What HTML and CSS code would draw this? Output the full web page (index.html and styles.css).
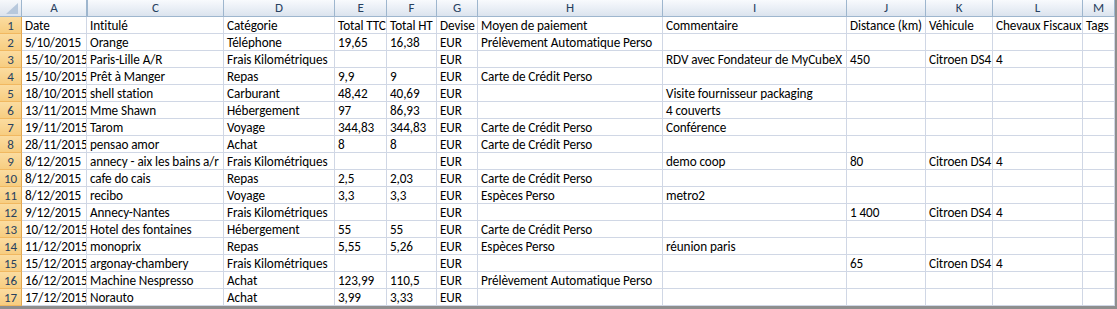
FILE: index.html
```html
<!DOCTYPE html>
<html lang="fr">
<head>
<meta charset="utf-8">
<title>Notes de frais</title>
<link rel="stylesheet" href="styles.css">
</head>
<body>
<div class="sheet">
  <div class="corner"><svg width="22" height="17" viewBox="0 0 22 17"><polygon points="18,3 18,14 6,14" fill="#b7c8dc"/></svg></div>
  <div class="ch sel">A</div><div class="ch hid">C</div><div class="ch">D</div><div class="ch">E</div><div class="ch">F</div><div class="ch">G</div><div class="ch">H</div><div class="ch">I</div><div class="ch">J</div><div class="ch">K</div><div class="ch">L</div><div class="ch">M</div>

  <div class="rh">1</div><div class="c">Date</div><div class="c">Intitulé</div><div class="c">Catégorie</div><div class="c">Total TTC</div><div class="c">Total HT</div><div class="c">Devise</div><div class="c">Moyen de paiement</div><div class="c">Commentaire</div><div class="c">Distance (km)</div><div class="c">Véhicule</div><div class="c">Chevaux Fiscaux</div><div class="c">Tags</div>

  <div class="rh">2</div><div class="c">5/10/2015</div><div class="c">Orange</div><div class="c">Téléphone</div><div class="c">19,65</div><div class="c">16,38</div><div class="c">EUR</div><div class="c">Prélèvement Automatique Perso</div><div class="c"></div><div class="c"></div><div class="c"></div><div class="c"></div><div class="c"></div>

  <div class="rh">3</div><div class="c">15/10/2015</div><div class="c">Paris-Lille A/R</div><div class="c">Frais Kilométriques</div><div class="c"></div><div class="c"></div><div class="c">EUR</div><div class="c"></div><div class="c">RDV avec Fondateur de MyCubeX</div><div class="c">450</div><div class="c">Citroen DS4</div><div class="c">4</div><div class="c"></div>

  <div class="rh">4</div><div class="c">15/10/2015</div><div class="c">Prêt à Manger</div><div class="c">Repas</div><div class="c">9,9</div><div class="c">9</div><div class="c">EUR</div><div class="c">Carte de Crédit Perso</div><div class="c"></div><div class="c"></div><div class="c"></div><div class="c"></div><div class="c"></div>

  <div class="rh">5</div><div class="c">18/10/2015</div><div class="c">shell station</div><div class="c">Carburant</div><div class="c">48,42</div><div class="c">40,69</div><div class="c">EUR</div><div class="c"></div><div class="c">Visite fournisseur packaging</div><div class="c"></div><div class="c"></div><div class="c"></div><div class="c"></div>

  <div class="rh">6</div><div class="c">13/11/2015</div><div class="c">Mme Shawn</div><div class="c">Hébergement</div><div class="c">97</div><div class="c">86,93</div><div class="c">EUR</div><div class="c"></div><div class="c">4 couverts</div><div class="c"></div><div class="c"></div><div class="c"></div><div class="c"></div>

  <div class="rh">7</div><div class="c">19/11/2015</div><div class="c">Tarom</div><div class="c">Voyage</div><div class="c">344,83</div><div class="c">344,83</div><div class="c">EUR</div><div class="c">Carte de Crédit Perso</div><div class="c">Conférence</div><div class="c"></div><div class="c"></div><div class="c"></div><div class="c"></div>

  <div class="rh">8</div><div class="c">28/11/2015</div><div class="c">pensao amor</div><div class="c">Achat</div><div class="c">8</div><div class="c">8</div><div class="c">EUR</div><div class="c">Carte de Crédit Perso</div><div class="c"></div><div class="c"></div><div class="c"></div><div class="c"></div><div class="c"></div>

  <div class="rh">9</div><div class="c">8/12/2015</div><div class="c">annecy - aix les bains a/r</div><div class="c">Frais Kilométriques</div><div class="c"></div><div class="c"></div><div class="c">EUR</div><div class="c"></div><div class="c">demo coop</div><div class="c">80</div><div class="c">Citroen DS4</div><div class="c">4</div><div class="c"></div>

  <div class="rh">10</div><div class="c">8/12/2015</div><div class="c">cafe do cais</div><div class="c">Repas</div><div class="c">2,5</div><div class="c">2,03</div><div class="c">EUR</div><div class="c">Carte de Crédit Perso</div><div class="c"></div><div class="c"></div><div class="c"></div><div class="c"></div><div class="c"></div>

  <div class="rh">11</div><div class="c">8/12/2015</div><div class="c">recibo</div><div class="c">Voyage</div><div class="c">3,3</div><div class="c">3,3</div><div class="c">EUR</div><div class="c">Espèces Perso</div><div class="c">metro2</div><div class="c"></div><div class="c"></div><div class="c"></div><div class="c"></div>

  <div class="rh">12</div><div class="c">9/12/2015</div><div class="c">Annecy-Nantes</div><div class="c">Frais Kilométriques</div><div class="c"></div><div class="c"></div><div class="c">EUR</div><div class="c"></div><div class="c"></div><div class="c">1 400</div><div class="c">Citroen DS4</div><div class="c">4</div><div class="c"></div>

  <div class="rh">13</div><div class="c">10/12/2015</div><div class="c">Hotel des fontaines</div><div class="c">Hébergement</div><div class="c">55</div><div class="c">55</div><div class="c">EUR</div><div class="c">Carte de Crédit Perso</div><div class="c"></div><div class="c"></div><div class="c"></div><div class="c"></div><div class="c"></div>

  <div class="rh">14</div><div class="c">11/12/2015</div><div class="c">monoprix</div><div class="c">Repas</div><div class="c">5,55</div><div class="c">5,26</div><div class="c">EUR</div><div class="c">Espèces Perso</div><div class="c">réunion paris</div><div class="c"></div><div class="c"></div><div class="c"></div><div class="c"></div>

  <div class="rh">15</div><div class="c">15/12/2015</div><div class="c">argonay-chambery</div><div class="c">Frais Kilométriques</div><div class="c"></div><div class="c"></div><div class="c">EUR</div><div class="c"></div><div class="c"></div><div class="c">65</div><div class="c">Citroen DS4</div><div class="c">4</div><div class="c"></div>

  <div class="rh">16</div><div class="c">16/12/2015</div><div class="c">Machine Nespresso</div><div class="c">Achat</div><div class="c">123,99</div><div class="c">110,5</div><div class="c">EUR</div><div class="c">Prélèvement Automatique Perso</div><div class="c"></div><div class="c"></div><div class="c"></div><div class="c"></div><div class="c"></div>

  <div class="rh">17</div><div class="c">17/12/2015</div><div class="c">Norauto</div><div class="c">Achat</div><div class="c">3,99</div><div class="c">3,33</div><div class="c">EUR</div><div class="c"></div><div class="c"></div><div class="c"></div><div class="c"></div><div class="c"></div><div class="c"></div>
</div>
</body>
</html>
```

FILE: styles.css
```css
html, body {
  margin: 0;
  padding: 0;
  background: #ffffff;
}

.sheet {
  display: grid;
  grid-template-columns: 22px 65px 137px 111px 52px 50px 41px 185px 184px 79px 67px 90px 32px;
  grid-template-rows: 17px repeat(17, 17px);
  width: 1115px;
  border-right: 2px solid #8e8e8e;
  border-bottom: 3px solid #8e8e8e;
  font-family: Carlito, Lato, "Liberation Sans", sans-serif;
  font-size: 13.2px;
  letter-spacing: -0.1px;
  color: #000000;
}

.corner {
  background: linear-gradient(#f6f8fb, #dce3ed);
  border-right: 1px solid #9eb6ce;
  border-bottom: 1px solid #9eb6ce;
  box-sizing: border-box;
  overflow: hidden;
}

.corner svg {
  display: block;
}

.ch {
  background: linear-gradient(#f8fafd 0%, #eaeff6 50%, #dbe3ee 100%);
  border-right: 1px solid #9eb6ce;
  border-bottom: 1px solid #9eb6ce;
  box-sizing: border-box;
  text-align: center;
  line-height: 16px;
  color: #27415f;
  font-size: 13px;
}

.ch.sel {
  background: linear-gradient(#fbfcfe 0%, #f0f4f9 50%, #e2e9f2 100%);
}

.ch.hid {
  border-left: 1px solid #9eb6ce;
}

.rh {
  background: linear-gradient(#fbdca0, #f7cd80);
  border-right: 1px solid #e2a74f;
  border-bottom: 1px solid #f1b860;
  box-sizing: border-box;
  text-align: center;
  line-height: 17px;
  color: #27415f;
  font-size: 13px;
}

.c {
  border-right: 1px solid #d0d7e5;
  border-bottom: 1px solid #d0d7e5;
  box-sizing: border-box;
  padding: 0 0 0 3px;
  line-height: 17px;
  white-space: nowrap;
  overflow: hidden;
}
```
